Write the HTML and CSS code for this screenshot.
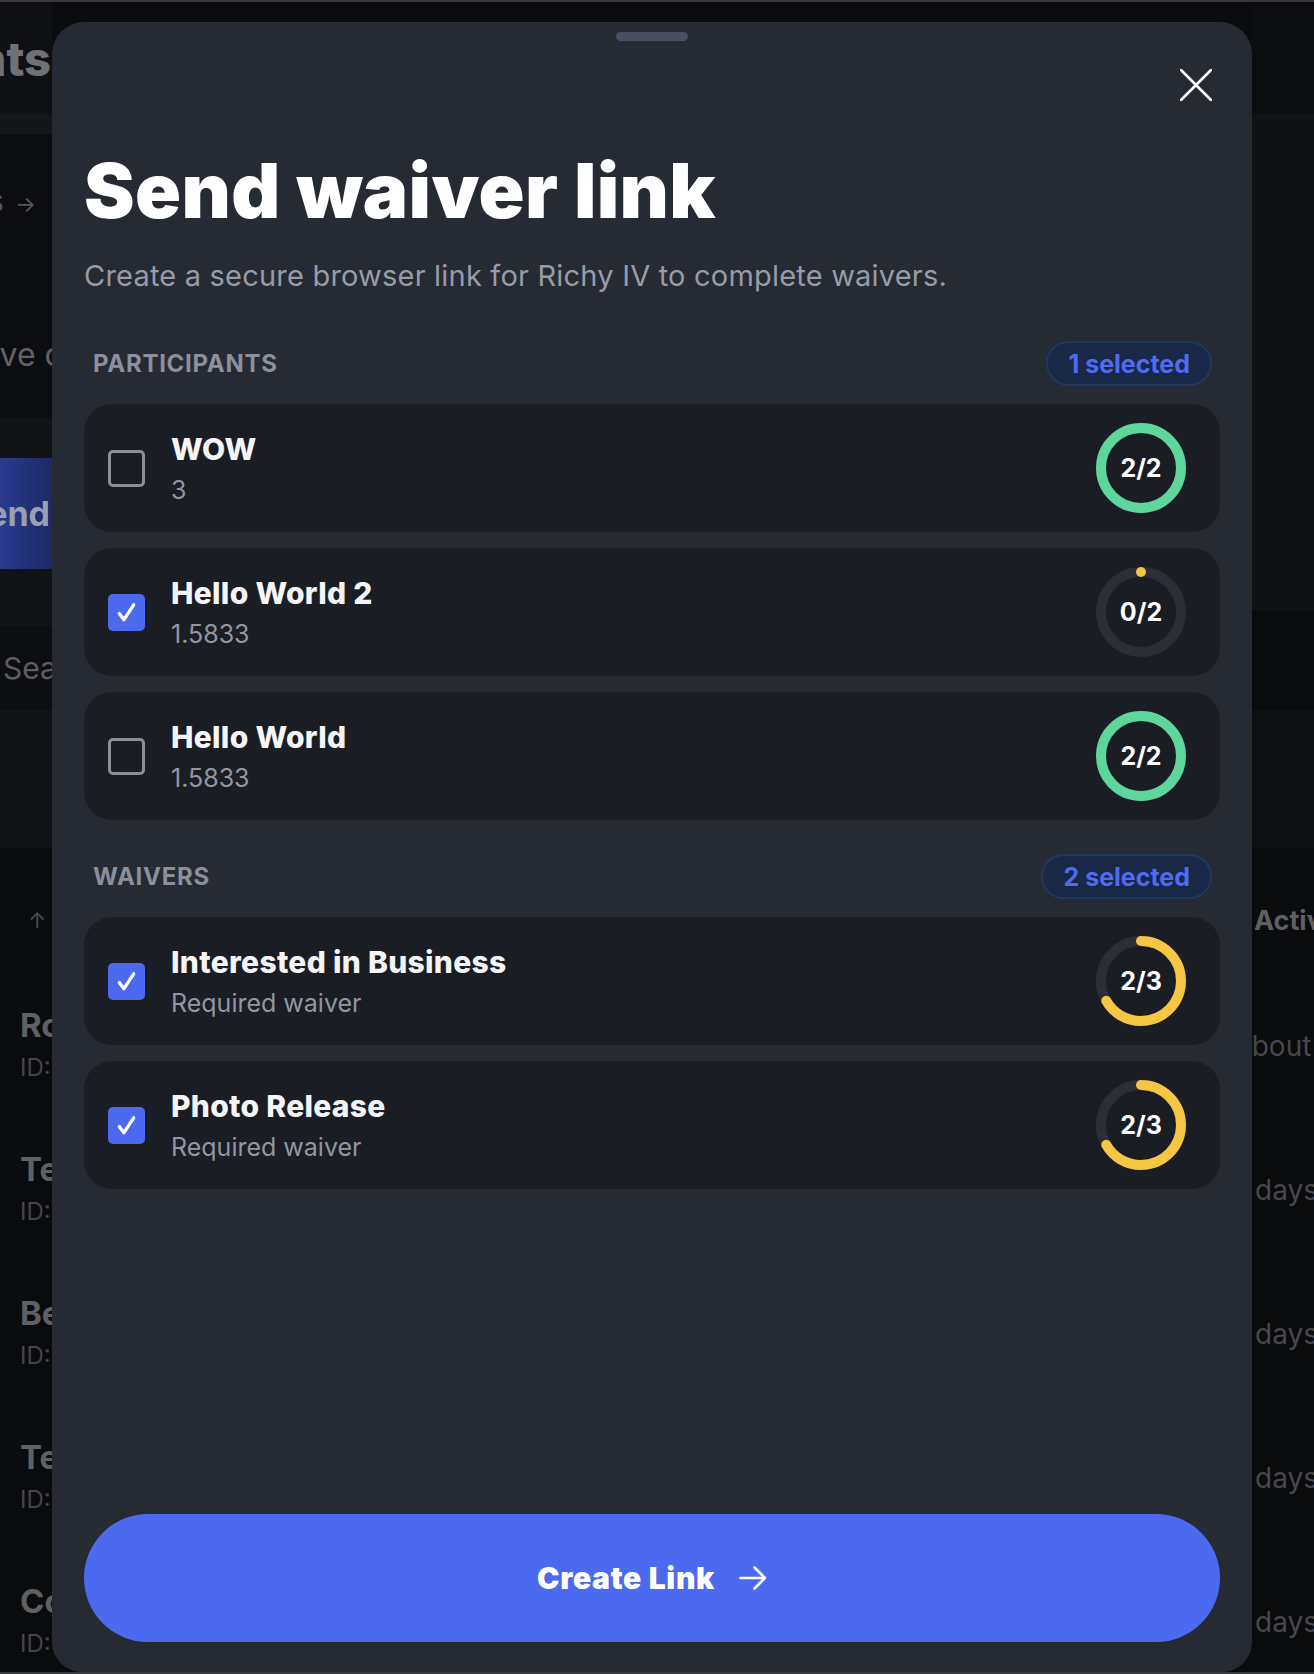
FILE: index.html
```html
<!DOCTYPE html>
<html lang="en">
<head>
    <meta charset="UTF-8" />
    <title>Send waiver link</title>
    <link rel="stylesheet" href="styles.css">
</head>
<body>

    <!-- page behind the sheet -->
    <div class="app">
        <div class="app-left">
            <div class="band head"><span class="page-title">Participants</span></div>
            <div class="band tabs"></div>
            <div class="band crumb-row"><span class="crumb">Events <span class="crumb-arrow">&rarr;</span></span></div>
            <div class="band lede-row"><span class="lede">Participants who have co</span></div>
            <div class="band strip"></div>
            <div class="band cta"><span class="cta-text">Send</span></div>
            <div class="band strip"></div>
            <div class="band search"><span class="search-text">Search participants</span></div>
            <div class="band strip tall"></div>
            <div class="table">
                <div class="table-head"><span class="sort">&uarr;</span></div>
                <div class="person"><span class="person-name">Robert Fox</span><span class="person-id">ID: 1029</span></div>
                <div class="person"><span class="person-name">Tess Hill</span><span class="person-id">ID: 1030</span></div>
                <div class="person"><span class="person-name">Ben Cole</span><span class="person-id">ID: 1031</span></div>
                <div class="person"><span class="person-name">Ted Moss</span><span class="person-id">ID: 1032</span></div>
                <div class="person"><span class="person-name">Cody Lane</span><span class="person-id">ID: 1033</span></div>
            </div>
        </div>

        <div class="app-right">
            <div class="band head-r"></div>
            <div class="band panel-r"></div>
            <div class="band dark-r"></div>
            <div class="band mid-r"></div>
            <div class="table">
                <div class="table-head"><span class="col-title">Activity</span></div>
                <div class="when"><span class="cut">about 1 hour</span></div>
                <div class="when"><span>days ago</span></div>
                <div class="when"><span>days ago</span></div>
                <div class="when"><span>days ago</span></div>
                <div class="when"><span>days ago</span></div>
            </div>
        </div>
    </div>

    <!-- bottom sheet -->
    <div class="sheet">
        <div class="grabber"></div>

        <div class="sheet-bar">
            <button class="close" aria-label="Close">
                <svg width="32" height="32" viewBox="0 0 32 32">
                    <path d="M1 1 L31 31 M31 1 L1 31" />
                </svg>
            </button>
        </div>

        <h1 class="sheet-title">Send waiver link</h1>
        <p class="sheet-sub">Create a secure browser link for Richy IV to complete waivers.</p>

        <div class="section-head">
            <span class="section-label">Participants</span>
            <span class="count">1 selected</span>
        </div>
        <div class="picks">
            <label class="pick">
                <span class="box"></span>
                <span class="pick-text">
                    <span class="pick-name">WOW</span>
                    <span class="pick-sub">3</span>
                </span>
                <span class="ring">
                    <svg viewBox="0 0 90 90">
                        <circle class="track" cx="45" cy="45" r="40" />
                        <circle class="arc done" cx="45" cy="45" r="40" stroke-dasharray="251.33 251.33" transform="rotate(-90 45 45)" />
                    </svg>
                    <span class="ring-num">2/2</span>
                </span>
            </label>

            <label class="pick">
                <span class="box on">
                    <svg viewBox="0 0 36 36"><path d="M11 19 L15.5 25 L25 10.5" /></svg>
                </span>
                <span class="pick-text">
                    <span class="pick-name">Hello World 2</span>
                    <span class="pick-sub">1.5833</span>
                </span>
                <span class="ring">
                    <svg viewBox="0 0 90 90">
                        <circle class="track" cx="45" cy="45" r="40" />
                        <circle class="arc part" cx="45" cy="45" r="40" stroke-dasharray="0.01 251.33" transform="rotate(-90 45 45)" />
                    </svg>
                    <span class="ring-num">0/2</span>
                </span>
            </label>

            <label class="pick">
                <span class="box"></span>
                <span class="pick-text">
                    <span class="pick-name">Hello World</span>
                    <span class="pick-sub">1.5833</span>
                </span>
                <span class="ring">
                    <svg viewBox="0 0 90 90">
                        <circle class="track" cx="45" cy="45" r="40" />
                        <circle class="arc done" cx="45" cy="45" r="40" stroke-dasharray="251.33 251.33" transform="rotate(-90 45 45)" />
                    </svg>
                    <span class="ring-num">2/2</span>
                </span>
            </label>
        </div>

        <div class="section-head gap">
            <span class="section-label">Waivers</span>
            <span class="count">2 selected</span>
        </div>
        <div class="picks">
            <label class="pick">
                <span class="box on">
                    <svg viewBox="0 0 36 36"><path d="M11 19 L15.5 25 L25 10.5" /></svg>
                </span>
                <span class="pick-text">
                    <span class="pick-name">Interested in Business</span>
                    <span class="pick-sub">Required waiver</span>
                </span>
                <span class="ring">
                    <svg viewBox="0 0 90 90">
                        <circle class="track" cx="45" cy="45" r="40" />
                        <circle class="arc part" cx="45" cy="45" r="40" stroke-dasharray="167.55 251.33" transform="rotate(-90 45 45)" />
                    </svg>
                    <span class="ring-num">2/3</span>
                </span>
            </label>

            <label class="pick">
                <span class="box on">
                    <svg viewBox="0 0 36 36"><path d="M11 19 L15.5 25 L25 10.5" /></svg>
                </span>
                <span class="pick-text">
                    <span class="pick-name">Photo Release</span>
                    <span class="pick-sub">Required waiver</span>
                </span>
                <span class="ring">
                    <svg viewBox="0 0 90 90">
                        <circle class="track" cx="45" cy="45" r="40" />
                        <circle class="arc part" cx="45" cy="45" r="40" stroke-dasharray="167.55 251.33" transform="rotate(-90 45 45)" />
                    </svg>
                    <span class="ring-num">2/3</span>
                </span>
            </label>
        </div>

        <button class="create">
            Create Link
            <svg width="28" height="26" viewBox="0 0 28 26">
                <path d="M1.5 13 H26 M15.5 2.5 L26 13 L15.5 23.5" />
            </svg>
        </button>
    </div>

</body>
</html>
```

FILE: styles.css
```css
* {
    box-sizing: border-box;
}

html, body {
    margin: 0;
    height: 100%;
}

body {
    background-color: #0a0b0d;
    font-family: Inter, 'Noto Sans', sans-serif;
    overflow: hidden;
}

/* ---------- page behind the sheet ---------- */

.app {
    display: flex;
    justify-content: space-between;
    height: 100vh;
    border-top: 2px solid #38373c;
    border-bottom: 2px solid #3a3b40;
}

.app-left {
    width: 52px;
    display: flex;
    flex-direction: column;
    overflow: hidden;
}

.app-right {
    width: 62px;
    display: flex;
    flex-direction: column;
    overflow: hidden;
}

.band {
    display: flex;
    align-items: center;
    flex-shrink: 0;
    white-space: nowrap;
}

.app-left .band {
    justify-content: flex-end;
}

.head {
    height: 112px;
    background-color: #0f1013;
}

.page-title {
    font-size: 47px;
    font-weight: 800;
    color: #707175;
    margin-right: 1px;
}

.tabs {
    height: 20px;
    background-color: #151619;
}

.crumb-row {
    height: 132px;
    background-color: #0c0d10;
}

.crumb {
    font-size: 32px;
    color: #55565a;
    margin-right: 16px;
}

.crumb-arrow {
    font-size: 22px;
    margin-left: 2px;
}

.lede-row {
    height: 152px;
    padding-top: 24px;
    background-color: #0c0d10;
}

.lede {
    font-size: 32px;
    color: #616266;
    margin-right: -30px;
}

.strip {
    height: 40px;
    background-color: #121316;
}

.cta + .strip {
    height: 57px;
}

.strip.tall {
    height: 138px;
}

.cta {
    height: 111px;
    background: linear-gradient(90deg, #2a3b8f, #1d2864);
}

.cta-text {
    font-size: 34px;
    font-weight: 700;
    color: #9a9fb2;
    margin-right: 2px;
}

.app-left .search {
    height: 84px;
    justify-content: flex-start;
    background-color: #0d0e11;
    padding-left: 3px;
}

.search-text {
    font-size: 30px;
    color: #5c5d61;
}

.table {
    flex: 1;
    background-color: #0a0b0d;
}

.table-head {
    height: 126px;
    padding-top: 18px;
    display: flex;
    align-items: center;
}

.sort {
    font-size: 22px;
    color: #4a4b4f;
    padding-left: 28px;
}

.person {
    height: 144px;
    padding: 31px 0 0 20px;
    display: flex;
    flex-direction: column;
    white-space: nowrap;
}

.person-name {
    font-size: 33px;
    line-height: 40px;
    font-weight: 700;
    color: #5f6064;
}

.person-id {
    font-size: 24px;
    line-height: 30px;
    margin-top: 8px;
    color: #45464a;
}

.head-r {
    height: 112px;
    background-color: #0c0d0f;
}

.panel-r {
    height: 496px;
    background-color: #111215;
}

.dark-r {
    height: 100px;
    background-color: #0a0b0d;
}

.mid-r {
    height: 138px;
    background-color: #0f1013;
}

.col-title {
    font-size: 27px;
    font-weight: 700;
    color: #5f6064;
    padding-left: 2px;
    white-space: nowrap;
}

.when {
    height: 144px;
    display: flex;
    align-items: center;
    white-space: nowrap;
    font-size: 28px;
    color: #47484c;
    padding-left: 3px;
}

.when .cut {
    margin-left: -19px;
}

/* ---------- bottom sheet ---------- */

.sheet {
    position: fixed;
    top: 22px;
    bottom: 2px;
    left: 52px;
    right: 62px;
    background-color: #262a33;
    border-radius: 32px 32px 30px 30px;
    padding: 0 32px 30px;
    display: flex;
    flex-direction: column;
    color: #ffffff;
}

.grabber {
    width: 72px;
    height: 9px;
    margin: 10px auto 0;
    border-radius: 5px;
    background-color: #4a4f62;
}

.sheet-bar {
    display: flex;
    justify-content: flex-end;
    margin-top: 22px;
}

.close {
    width: 44px;
    height: 44px;
    margin-right: 2px;
    padding: 0;
    border: none;
    background: none;
    display: flex;
    align-items: center;
    justify-content: center;
    cursor: pointer;
}

.close path {
    stroke: #ffffff;
    stroke-width: 2.6;
    stroke-linecap: round;
    fill: none;
}

.sheet-title {
    margin: 41px 0 0;
    font-size: 76px;
    line-height: 84px;
    font-weight: 900;
    letter-spacing: 0.005em;
}

.sheet-sub {
    margin: 24px 0 0;
    font-size: 29px;
    line-height: 40px;
    letter-spacing: 0.2px;
    color: #979ca8;
}

.section-head {
    display: flex;
    align-items: center;
    justify-content: space-between;
    margin-top: 45px;
    padding: 0 8px 0 9px;
}

.section-head.gap {
    margin-top: 34px;
}

.section-label {
    font-size: 24px;
    font-weight: 700;
    letter-spacing: 0.03em;
    text-transform: uppercase;
    color: #8b909c;
}

.count {
    height: 45px;
    padding: 0 20px;
    display: flex;
    align-items: center;
    border-radius: 23px;
    border: 2px solid #22365f;
    background-color: #1a2847;
    color: #4d6cf1;
    font-size: 25px;
    font-weight: 700;
}

.picks {
    display: flex;
    flex-direction: column;
    gap: 16px;
    margin-top: 18px;
}

.pick {
    height: 128px;
    display: flex;
    align-items: center;
    padding: 0 34px 0 24px;
    border-radius: 28px;
    background-color: #1b1d24;
    cursor: pointer;
}

.box {
    width: 37px;
    height: 37px;
    flex-shrink: 0;
    border: 3px solid #8c8f97;
    border-radius: 5px;
}

.box.on {
    border: none;
    background-color: #4c6af0;
}

.box svg {
    display: block;
    width: 37px;
    height: 37px;
}

.box path {
    fill: none;
    stroke: #ffffff;
    stroke-width: 3.2;
    stroke-linecap: round;
    stroke-linejoin: round;
}

.pick-text {
    flex: 1;
    display: flex;
    flex-direction: column;
    margin-left: 26px;
}

.pick-name {
    font-size: 30px;
    line-height: 36px;
    font-weight: 800;
    letter-spacing: 0.3px;
    color: #f4f5f7;
}

.pick-sub {
    margin-top: 8px;
    font-size: 25px;
    line-height: 30px;
    color: #9196a1;
}

.ring {
    position: relative;
    width: 90px;
    height: 90px;
    flex-shrink: 0;
}

.ring svg {
    display: block;
    width: 90px;
    height: 90px;
}

.ring circle {
    fill: none;
    stroke-width: 10;
}

.ring .track {
    stroke: #2b2e37;
}

.ring .arc {
    stroke-linecap: round;
}

.ring .done {
    stroke: #5dd59b;
}

.ring .part {
    stroke: #f5c544;
}

/* fraction sits over the ring */
.ring-num {
    position: absolute;
    inset: 0;
    display: flex;
    align-items: center;
    justify-content: center;
    font-size: 25px;
    font-weight: 700;
    color: #ffffff;
}

.create {
    margin-top: auto;
    height: 128px;
    border: none;
    border-radius: 64px;
    background-color: #4b6aef;
    color: #ffffff;
    font-family: inherit;
    font-size: 30px;
    font-weight: 900;
    letter-spacing: 0.7px;
    display: flex;
    align-items: center;
    justify-content: center;
    gap: 24px;
    cursor: pointer;
}

.create path {
    fill: none;
    stroke: #ffffff;
    stroke-width: 2.6;
    stroke-linecap: round;
    stroke-linejoin: round;
}
```
